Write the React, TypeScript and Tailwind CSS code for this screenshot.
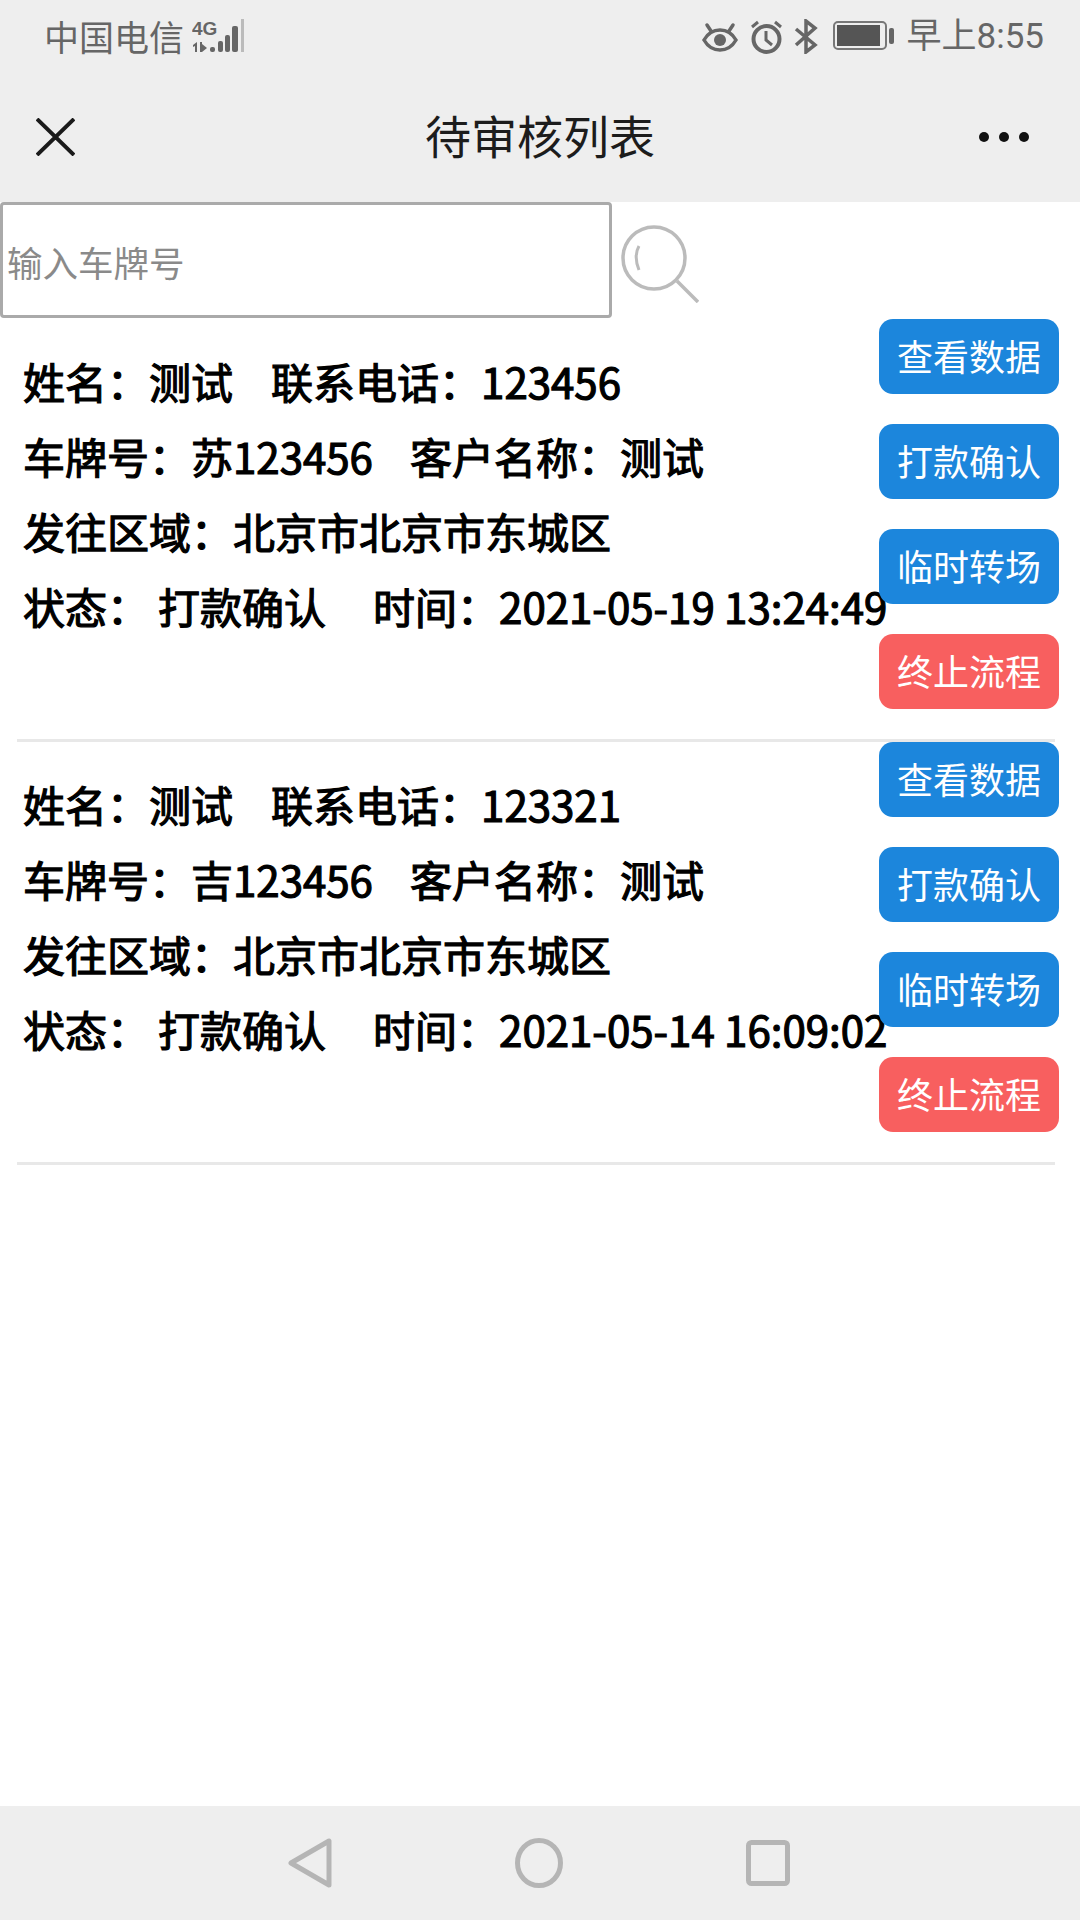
const cjk = "font-['Noto_Sans_CJK_SC','Noto_Sans',sans-serif]";
const colon = "\uFF1A";

type Record = {
  name: string;
  phone: string;
  plate: string;
  customer: string;
  area: string;
  status: string;
  time: string;
};

const records: Record[] = [
  {
    name: "测试",
    phone: "123456",
    plate: "苏123456",
    customer: "测试",
    area: "北京市北京市东城区",
    status: "打款确认",
    time: "2021-05-19 13:24:49",
  },
  {
    name: "测试",
    phone: "123321",
    plate: "吉123456",
    customer: "测试",
    area: "北京市北京市东城区",
    status: "打款确认",
    time: "2021-05-14 16:09:02",
  },
];

function StatusBar() {
  return (
    <div className="flex h-[72px] items-center justify-between pl-[44px] pr-[36px] text-[#666]">
      <div className="flex items-center">
        <span className="-mt-[2px] text-[35px] leading-none">中国电信</span>
        <svg className="ml-[8px]" width="54" height="36" viewBox="0 0 54 36" fill="#666">
          <path d="M1 27l4-3v10h-2v-6l-2 1zM8 24v10h2l5-4-5-4v-2z" />
          <rect x="18" y="29" width="5" height="5" rx="2" />
          <rect x="26" y="23" width="5" height="11" rx="2" />
          <rect x="33" y="17" width="5" height="17" rx="2" />
          <rect x="40" y="8" width="6" height="26" rx="2" />
          <rect x="49" y="1" width="3" height="33" fill="#bbb" />
          <text x="0" y="17" fontSize="19" fontWeight="700" fontFamily="'Liberation Sans Narrow', 'Liberation Sans', sans-serif">
            4G
          </text>
        </svg>
      </div>
      <div className="flex items-center">
        <svg width="36" height="34" viewBox="0 0 36 34" fill="none" stroke="#666" strokeWidth="3.5">
          <path d="M2 21c4-7 9-10 16-10s12 3 16 10c-4 7-9 10-16 10S6 28 2 21z" />
          <circle cx="18" cy="21" r="6" fill="#666" stroke="none" />
          <path d="M5 6l4 6M31 6l-4 6" strokeLinecap="round" />
        </svg>
        <svg className="ml-[11px]" width="35" height="35" viewBox="0 0 35 35" fill="none" stroke="#666" strokeWidth="4">
          <circle cx="17.5" cy="20" r="13" />
          <path d="M17 12v9l6 5" strokeWidth="3" />
          <path d="M3 8l6-5M32 8l-6-5" strokeWidth="3" />
        </svg>
        <svg className="ml-[9px]" width="25" height="35" viewBox="0 0 25 35" fill="none" stroke="#666" strokeWidth="3.5">
          <path d="M3 10l19 16-9 7V2l9 7L3 26" />
        </svg>
        <svg className="ml-[15px]" width="61" height="30" viewBox="0 0 61 30" fill="none">
          <rect x="1" y="1" width="52" height="27" rx="4" stroke="#777" strokeWidth="2" />
          <rect x="4" y="4" width="43" height="21" fill="#555" />
          <rect x="56" y="7" width="5" height="16" rx="2" fill="#666" />
        </svg>
        <span className="ml-[13px] text-[35px] leading-none font-['Roboto','Noto_Sans_CJK_SC',sans-serif]">
          早上8:55
        </span>
      </div>
    </div>
  );
}

function NavBar() {
  return (
    <div className="flex h-[130px] items-center pl-[36px] pr-[51px]">
      <div className="flex flex-1">
        <svg width="39" height="38" viewBox="0 0 39 38" stroke="#1a1a1a" strokeWidth="4" fill="none">
          <path d="M1 1l37 36M38 1L1 37" />
        </svg>
      </div>
      <h1 className="mb-[6px] mr-[-15px] text-[46px] leading-none text-[#1c1c1c]">待审核列表</h1>
      <div className="flex flex-1 justify-end gap-[10px]">
        <span className="h-[10px] w-[10px] rounded-full bg-[#111]" />
        <span className="h-[10px] w-[10px] rounded-full bg-[#111]" />
        <span className="h-[10px] w-[10px] rounded-full bg-[#111]" />
      </div>
    </div>
  );
}

function SearchRow() {
  return (
    <div className="flex h-[117px] items-start">
      <input
        placeholder="输入车牌号"
        className="h-[116px] w-[612px] rounded-[4px] border-[3px] border-[#aaa] bg-white pl-[4px] pt-[2px] text-[35.5px] outline-none placeholder:text-[#8a8a8a]"
      />
      <svg className="ml-[9px] mt-[23px]" width="78" height="78" viewBox="0 0 78 78" fill="none" stroke="#bbb" strokeWidth="3.5">
        <circle cx="33" cy="33" r="31" />
        <path d="M56 56l21 21" />
        <path d="M18 21c-4 7-4 14 0 24" strokeWidth="3" />
      </svg>
    </div>
  );
}

function ActionButton({ label, danger }: { label: string; danger?: boolean }) {
  return (
    <button
      className={`h-[75px] w-[180px] rounded-[14px] pb-[4px] text-[36px] leading-none text-white ${
        danger ? "bg-[#f85f5f]" : "bg-[#1c86dc]"
      }`}
    >
      {label}
    </button>
  );
}

function RecordItem({ item }: { item: Record }) {
  return (
    <div className="ml-[17px] mr-[25px] flex justify-between border-b-[3px] border-[#e8e8e8] pb-[30px]">
      <div className="w-0 flex-1 whitespace-nowrap pl-[6px] pt-[24px] text-[42px] leading-[75px] text-black [-webkit-text-stroke:1.2px_#000]">
        <div>
          姓名{colon}{item.name}
          <span className="ml-[38px]">联系电话{colon}{item.phone}</span>
        </div>
        <div>
          车牌号{colon}{item.plate}
          <span className="ml-[37px]">客户名称{colon}{item.customer}</span>
        </div>
        <div>发往区域{colon}{item.area}</div>
        <div>
          状态{colon}
          <span className="ml-[9px]">{item.status}</span>
          <span className="ml-[47px]">时间{colon}{item.time}</span>
        </div>
      </div>
      <div className="relative z-10 -mr-[4px] flex flex-col gap-[30px]">
        <ActionButton label="查看数据" />
        <ActionButton label="打款确认" />
        <ActionButton label="临时转场" />
        <ActionButton label="终止流程" danger />
      </div>
    </div>
  );
}

function BottomBar() {
  return (
    <div className="flex h-[114px] items-center justify-center gap-[183px] bg-[#eeeeee] pr-[2px]">
      <svg width="44" height="50" viewBox="0 0 44 50" fill="none" stroke="#b5b5b5" strokeWidth="5" strokeLinejoin="round">
        <path d="M41 3v44L3 25z" />
      </svg>
      <svg width="48" height="50" viewBox="0 0 48 50" fill="none" stroke="#b5b5b5" strokeWidth="5">
        <ellipse cx="24" cy="25" rx="21.5" ry="22.5" />
      </svg>
      <svg width="44" height="46" viewBox="0 0 44 46" fill="none" stroke="#b5b5b5" strokeWidth="5">
        <rect x="2.5" y="2.5" width="39" height="41" rx="3" />
      </svg>
    </div>
  );
}

export default function App() {
  return (
    <div className={`flex h-[1920px] w-[1080px] flex-col overflow-hidden bg-white ${cjk}`}>
      <div className="bg-[#eeeeee]">
        <StatusBar />
        <NavBar />
      </div>
      <div className="flex-1">
        <SearchRow />
        {records.map((item) => (
          <RecordItem key={item.phone} item={item} />
        ))}
      </div>
      <BottomBar />
    </div>
  );
}
